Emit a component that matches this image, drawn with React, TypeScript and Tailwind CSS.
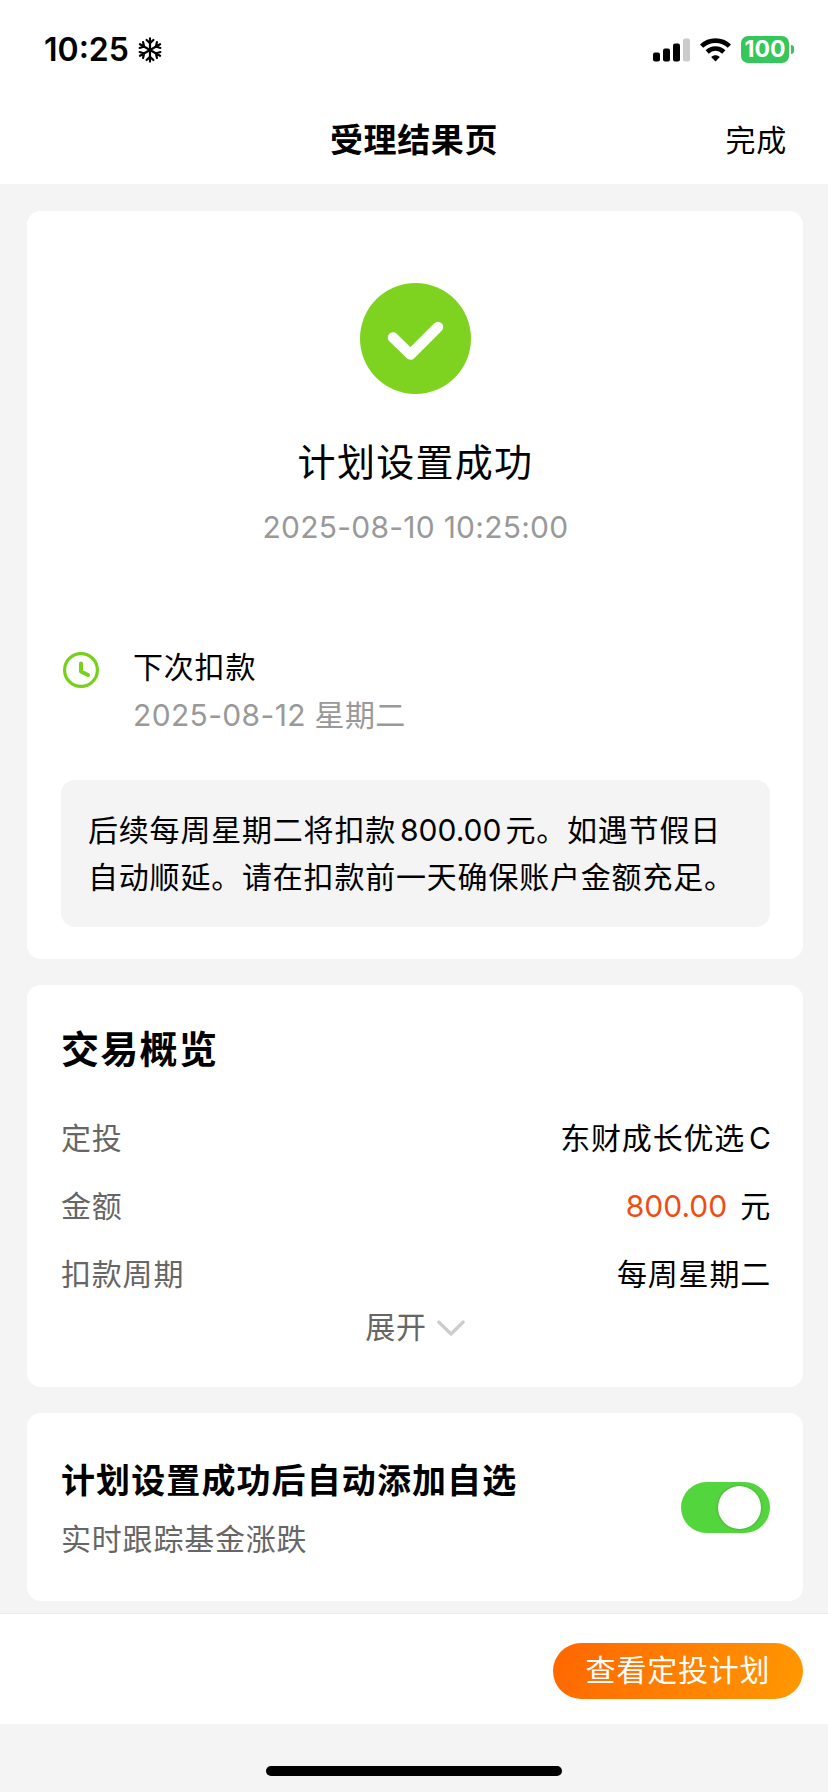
import React from "react";

interface IRowProps {
  label: string;
  children: React.ReactNode;
}

const StatusBar = () => (
  <div className="h-[99px] pl-[44px] pr-[34px] flex items-center justify-between">
    <div className="flex items-center">
      <span className="w-[94px] text-[32px] font-semibold tracking-[0] whitespace-nowrap">
        10:25
      </span>
      <svg
        className="w-[24px] h-[26px]"
        viewBox="0 0 24 26"
        fill="none"
        stroke="currentColor"
        strokeWidth="2.2"
        strokeLinecap="round"
      >
        {[0, 60, 120, 180, 240, 300].map((angle) => (
          <path
            key={angle}
            d="M12 13V1.4M8.6 3L12 6.2L15.4 3"
            transform={`rotate(${angle} 12 13)`}
          />
        ))}
      </svg>
    </div>
    <div className="flex items-center">
      <svg className="w-[37px] h-[24px]" viewBox="0 0 37 24">
        <rect x="0" y="14.5" width="7" height="9" rx="2" />
        <rect x="10" y="10.5" width="7" height="13" rx="2" />
        <rect x="20" y="5.5" width="7" height="18" rx="2" />
        <rect x="30" y="0.5" width="7" height="23" rx="2" fill="#cbcbcb" />
      </svg>
      <svg className="ml-[10px] w-[31px] h-[24px]" viewBox="0 0 31 24">
        <path
          d="M1.6 8.2C9.3 0.7 21.7 0.7 29.4 8.2M7.2 14C12 9.3 19 9.3 23.8 14"
          fill="none"
          stroke="currentColor"
          strokeWidth="4.6"
        />
        <path d="M15.5 23.4L11.2 18.9C13.6 16.6 17.4 16.6 19.8 18.9Z" />
      </svg>
      <div className="ml-[10px] w-[48px] h-[27px] rounded-[7px] bg-[#35c759] flex items-center justify-center text-[23px] leading-[27px] tracking-[0] font-bold text-white">
        100
      </div>
      <div className="ml-[2px] w-[3px] h-[9px] rounded-r-full bg-[#35c759]" />
    </div>
  </div>
);

const Row = ({ label, children }: IRowProps) => (
  <div className="h-[68px] flex items-center justify-between">
    <span className="text-[#666]">{label}</span>
    <span className="-mr-px">{children}</span>
  </div>
);

export default function App() {
  return (
    <div className="w-[828px] h-[1792px] overflow-hidden flex flex-col bg-[#f4f4f4] text-black text-[30px] leading-[47px] tracking-[0.8px] font-['Inter','Noto_Sans_CJK_SC',sans-serif]">
      <header className="h-[184px] shrink-0 bg-white">
        <StatusBar />
        <div className="h-[82px] px-[41px] grid grid-cols-3 items-center">
          <h1 className="col-start-2 text-center text-[33px] font-semibold whitespace-nowrap tracking-[0.6px]">
            受理结果页
          </h1>
          <span className="text-right tracking-[0.8px]">完成</span>
        </div>
      </header>

      <main className="h-[1429px] shrink-0 pt-[27px] pl-[27px] pr-[25px] flex flex-col gap-[26px]">
        <section className="h-[748px] shrink-0 bg-white rounded-[14px] pl-[34px] pr-[33px]">
          <div className="pt-[72px] flex flex-col items-center">
            <svg className="w-[111px] h-[111px]" viewBox="0 0 111 111">
              <circle cx="55.5" cy="55.5" r="55.5" fill="#7ed321" />
              <path
                d="M33 54.5L50.5 71.5L78 44"
                fill="none"
                stroke="#fff"
                strokeWidth="10.5"
                strokeLinecap="round"
                strokeLinejoin="round"
              />
            </svg>
            <h2 className="mt-[41px] text-[38px] leading-[54px] tracking-[1.3px]">
              计划设置成功
            </h2>
            <p className="mt-[15px] text-[#999] tracking-[0.25px]">
              2025-08-10 10:25:00
            </p>
          </div>
          <div className="mt-[93px] flex">
            <svg
              className="mt-[8px] ml-[2px] w-[36px] h-[36px]"
              viewBox="0 0 36 36"
              fill="none"
              stroke="#75d11b"
              strokeLinecap="round"
              strokeLinejoin="round"
            >
              <circle cx="18" cy="18" r="16.4" strokeWidth="3.2" />
              <path d="M18 11.5V19.5L25 23" strokeWidth="4" />
            </svg>
            <div className="ml-[34px]">
              <p>下次扣款</p>
              <p className="mt-px text-[#999] tracking-[0.35px]">
                2025-08-12 星期二
              </p>
            </div>
          </div>
          <div className="mt-[41px] h-[147px] pl-[27px] pt-[27px] bg-[#f4f4f4] rounded-[14px] whitespace-nowrap">
            <p>
              后续每周星期二将扣款
              <span className="mx-[4px] tracking-[0]">800.00</span>
              元。如遇节假日
            </p>
            <p>自动顺延。请在扣款前一天确保账户金额充足。</p>
          </div>
        </section>

        <section className="h-[402px] shrink-0 bg-white rounded-[14px] pl-[34px] pr-[33px] pt-[37px]">
          <h2 className="text-[38px] leading-[54px] font-bold tracking-[1.3px]">
            交易概览
          </h2>
          <div className="mt-[28px]">
            <Row label="定投">
              东财成长优选<span className="ml-[4px] tracking-[0]">C</span>
            </Row>
            <Row label="金额">
              <span className="text-[#ee4d11] tracking-[0]">800.00</span>
              <span className="ml-[13px]">元</span>
            </Row>
            <Row label="扣款周期">每周星期二</Row>
          </div>
          <div className="-mt-[4px] flex items-center justify-center text-[#666]">
            展开
            <svg
              className="ml-[10px] mr-px w-[28px] h-[16px]"
              viewBox="0 0 28 16"
              fill="none"
              stroke="#ccc"
              strokeWidth="3.2"
              strokeLinecap="round"
              strokeLinejoin="round"
            >
              <path d="M1.8 2L14 14L26.2 2" />
            </svg>
          </div>
        </section>

        <section className="h-[188px] shrink-0 bg-white rounded-[14px] pl-[34px] pr-[33px] flex items-center justify-between">
          <div className="pt-[2px]">
            <h3 className="text-[34px] leading-[54px] font-bold tracking-[1.1px]">
              计划设置成功后自动添加自选
            </h3>
            <p className="mt-[8px] text-[#666]">实时跟踪基金涨跌</p>
          </div>
          <div className="w-[89px] h-[51px] rounded-full bg-[#53d53d] flex items-center justify-end pr-[9px]">
            <div className="mt-px w-[43px] h-[43px] rounded-full bg-white shadow-[0_0_3px_rgba(0,0,0,0.25)]" />
          </div>
        </section>
      </main>

      <footer className="h-[111px] shrink-0 bg-white border-t border-[#ebebeb] pr-[25px] flex items-center justify-end">
        <button className="mt-[4px] w-[250px] h-[56px] leading-[54px] pb-[2px] rounded-full bg-[linear-gradient(115deg,#ff6600,#ff9900)] text-white tracking-[0.8px]">
          查看定投计划
        </button>
      </footer>
      <div className="mt-[42px] mx-auto w-[296px] h-[10px] shrink-0 rounded-full bg-black" />
    </div>
  );
}
